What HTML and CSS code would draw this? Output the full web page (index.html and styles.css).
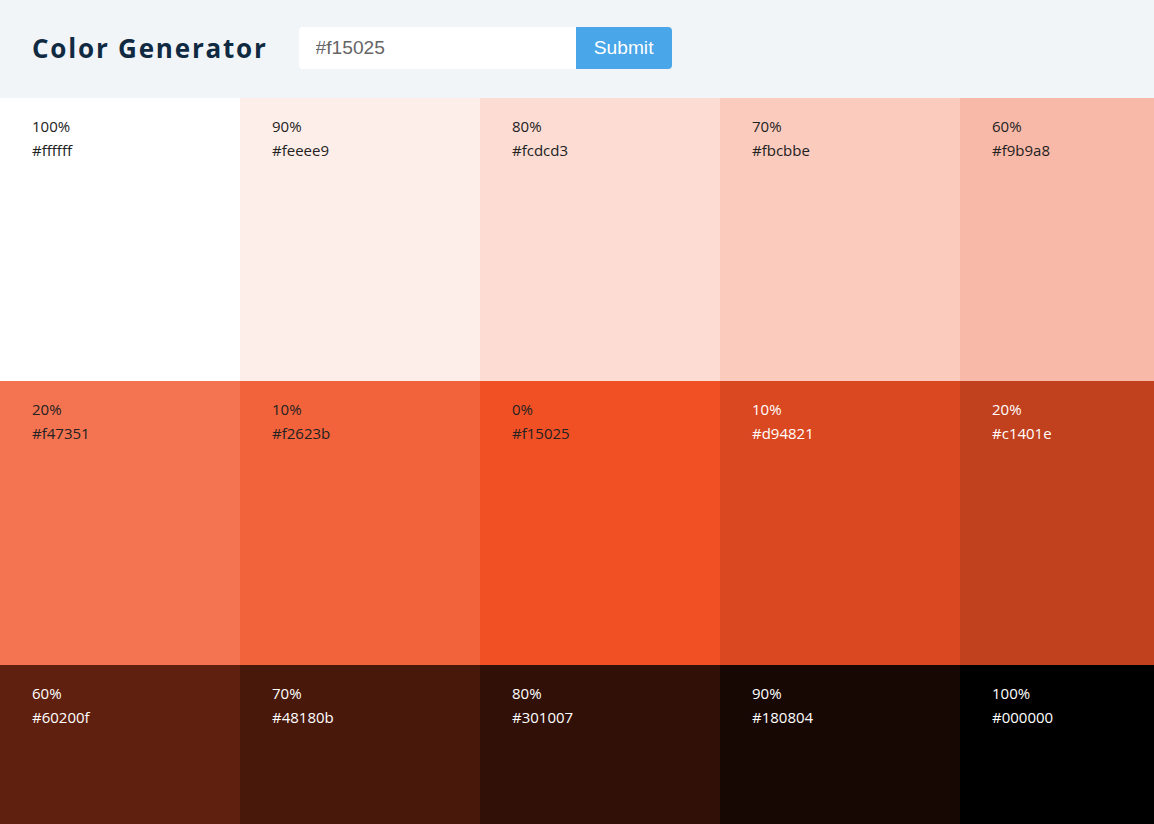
FILE: index.html
```html
<!DOCTYPE html>
<html lang="en">
<head>
<meta charset="utf-8">
<title>Color Generator</title>
<link rel="stylesheet" href="styles.css">
</head>
<body>
<section class="container">
  <h3 class="title">Color Generator</h3>
  <form class="form">
    <input type="text" class="field" value="#f15025">
    <button type="submit" class="btn">Submit</button>
  </form>
</section>
<section class="colors">
  <article class="color" style="background:#ffffff"><p class="percent">100%</p><p class="hex">#ffffff</p></article>
  <article class="color" style="background:#feeee9"><p class="percent">90%</p><p class="hex">#feeee9</p></article>
  <article class="color" style="background:#fcdcd3"><p class="percent">80%</p><p class="hex">#fcdcd3</p></article>
  <article class="color" style="background:#fbcbbe"><p class="percent">70%</p><p class="hex">#fbcbbe</p></article>
  <article class="color" style="background:#f9b9a8"><p class="percent">60%</p><p class="hex">#f9b9a8</p></article>
  <article class="color" style="background:#f47351"><p class="percent">20%</p><p class="hex">#f47351</p></article>
  <article class="color" style="background:#f2623b"><p class="percent">10%</p><p class="hex">#f2623b</p></article>
  <article class="color" style="background:#f15025"><p class="percent">0%</p><p class="hex">#f15025</p></article>
  <article class="color light" style="background:#d94821"><p class="percent">10%</p><p class="hex">#d94821</p></article>
  <article class="color light" style="background:#c1401e"><p class="percent">20%</p><p class="hex">#c1401e</p></article>
  <article class="color light" style="background:#60200f"><p class="percent">60%</p><p class="hex">#60200f</p></article>
  <article class="color light" style="background:#48180b"><p class="percent">70%</p><p class="hex">#48180b</p></article>
  <article class="color light" style="background:#301007"><p class="percent">80%</p><p class="hex">#301007</p></article>
  <article class="color light" style="background:#180804"><p class="percent">90%</p><p class="hex">#180804</p></article>
  <article class="color light" style="background:#000000"><p class="percent">100%</p><p class="hex">#000000</p></article>
</section>
</body>
</html>
```
FILE: styles.css
```css
* { box-sizing: border-box; margin: 0; padding: 0; }
html, body { overflow: hidden; }
body {
  background: #ffffff;
  font-family: "Open Sans", "Noto Sans", sans-serif;
  color: #222222;
}
.container {
  height: 98px;
  background: #f1f5f8;
  display: flex;
  align-items: center;
  padding: 0 0 2px 32px;
}
.title {
  font-family: "Open Sans", sans-serif;
  font-weight: 700;
  font-size: 26px;
  letter-spacing: 1.8px;
  color: #102a42;
  margin-right: 31px;
}
.form {
  display: flex;
  height: 42px;
}
.field {
  width: 277px;
  height: 42px;
  border: none;
  outline: none;
  background: #ffffff;
  border-radius: 4px 0 0 4px;
  padding: 0 17px;
  font-family: "Liberation Sans", Arial, sans-serif;
  font-size: 19.2px;
  color: #666666;
}
.btn {
  width: 96px;
  height: 42px;
  border: none;
  background: #49a6e9;
  color: #ffffff;
  border-radius: 0 4px 4px 0;
  font-family: "Liberation Sans", Arial, sans-serif;
  font-size: 19.2px;
}
.colors {
  display: grid;
  grid-template-columns: repeat(5, 240px);
  grid-template-rows: 283px 284px 284px;
  width: 1200px;
}
.color {
  padding: 16px 32px;
  font-size: 15px;
  line-height: 24px;
  color: #222222;
}
.color.light { color: #ffffff; }
```
